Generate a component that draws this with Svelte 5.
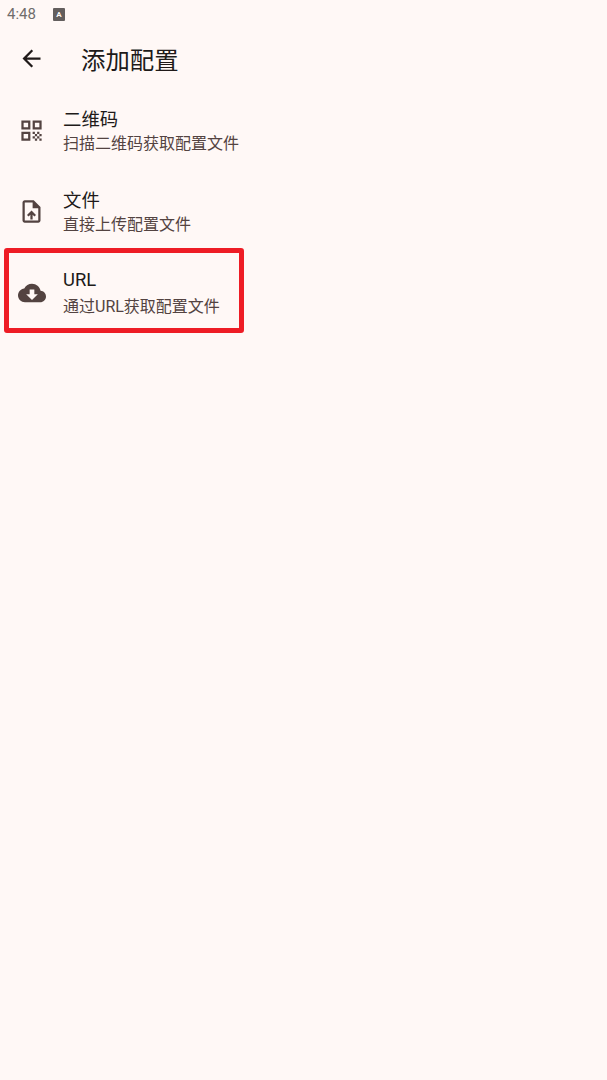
<script>
  const items = [
    { id: 'qr', title: '二维码', sub: '扫描二维码获取配置文件' },
    { id: 'file', title: '文件', sub: '直接上传配置文件' },
    { id: 'url', title: 'URL', sub: '通过URL获取配置文件' }
  ];
</script>

<div class="page">
  <div class="status">
    <span class="time">4:48</span>
    <span class="badge">A</span>
  </div>
  <header class="bar">
    <svg class="back" viewBox="0 0 24 24" width="27" height="27"><path d="M20 11H7.83l5.59-5.59L12 4l-8 8 8 8 1.41-1.41L7.83 13H20v-2z"/></svg>
    <h1>添加配置</h1>
  </header>
  <div class="list">
    {#each items as item}
      <div class="row {item.id}">
        <div class="icon">
          {#if item.id === 'qr'}
            <svg viewBox="0 0 24 24" width="27" height="27"><path d="M3 11h8V3H3v8zm2-6h4v4H5V5zM3 21h8v-8H3v8zm2-6h4v4H5v-4zM13 3v8h8V3h-8zm6 6h-4V5h4v4zM19 19h2v2h-2zM13 13h2v2h-2zM15 15h2v2h-2zM13 17h2v2h-2zM15 19h2v2h-2zM17 17h2v2h-2zM17 13h2v2h-2zM19 15h2v2h-2z"/></svg>
          {:else if item.id === 'file'}
            <svg viewBox="0 0 24 24" width="27" height="27"><path d="M14 2H6c-1.1 0-1.99.9-1.99 2L4 20c0 1.1.89 2 1.99 2H18c1.1 0 2-.9 2-2V8l-6-6zm4 18H6V4h7v5h5v11zM8 15.01l1.41 1.41L11 14.84V19h2v-4.16l1.59 1.59L16 15.01 12.01 11z"/></svg>
          {:else}
            <svg viewBox="0 0 24 24" width="28" height="28"><path d="M19.35 10.04C18.67 6.59 15.64 4 12 4 9.11 4 6.6 5.64 5.35 8.04 2.34 8.36 0 10.91 0 14c0 3.31 2.69 6 6 6h13c2.76 0 5-2.24 5-5 0-2.64-2.05-4.78-4.65-4.96zM17 13l-5 5-5-5h3V9h4v4h3z"/></svg>
          {/if}
        </div>
        <div class="text">
          <div class="title">{item.title}</div>
          <div class="sub">{item.sub}</div>
        </div>
      </div>
    {/each}
    <div class="mark"></div>
  </div>
</div>

<style>
  :global(body) {
    margin: 0;
    background: #fff8f6;
  }
  .page {
    height: 1080px;
    background: #fff8f6;
    font-family: Roboto, "Noto Sans CJK SC", sans-serif;
    overflow: hidden;
  }
  .status {
    height: 28px;
    display: flex;
    align-items: center;
    padding-left: 7px;
    gap: 17px;
    color: #706d6c;
    font-size: 15px;
  }
  .badge {
    width: 12px;
    height: 13px;
    background: #635e5d;
    color: #fff8f6;
    border-radius: 1px;
    font-size: 8px;
    font-weight: 700;
    line-height: 13px;
    text-align: center;
  }
  .bar {
    height: 60px;
    display: flex;
    align-items: center;
    padding-left: 18px;
  }
  .back {
    fill: #201a19;
    margin-top: 1px;
  }
  h1 {
    margin: 0 0 0 36px;
    font-size: 24.4px;
    font-weight: 400;
    color: #201a19;
  }
  .list {
    position: relative;
    padding-top: 2px;
  }
  .row {
    height: 81px;
    display: flex;
    align-items: center;
    box-sizing: border-box;
  }
  .icon {
    width: 63px;
    flex: none;
    display: flex;
    justify-content: center;
    box-sizing: border-box;
  }
  .icon svg {
    fill: #534341;
  }
  .title {
    font-size: 18.4px;
    line-height: 26px;
    color: #201a19;
  }
  .sub {
    font-size: 16px;
    line-height: 22px;
    color: #534341;
  }
  .qr .text,
  .file .text {
    padding-top: 1px;
  }
  .url .title {
    margin-bottom: 3px;
  }
  .mark {
    position: absolute;
    left: 4px;
    top: 160px;
    width: 240px;
    height: 85px;
    border: 5px solid #ee1c25;
    border-radius: 3px;
    box-sizing: border-box;
  }
</style>
